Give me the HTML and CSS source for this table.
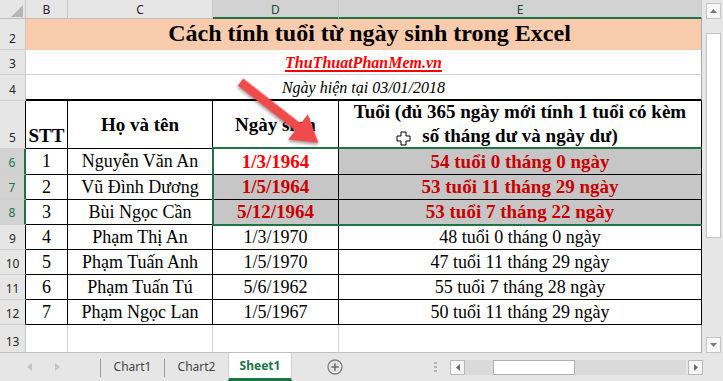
FILE: index.html
```html
<!DOCTYPE html>
<html>
<head>
<meta charset="utf-8">
<link rel="stylesheet" href="styles.css">
</head>
<body>
<div class="app">
  <div class="main">
    <div class="sheet">
      <div class="corner"><svg width="26" height="19" viewBox="0 0 26 19"><polygon points="11,17 23,17 23,5" fill="#b5b5b5"/></svg></div>
      <div class="ch">B</div>
      <div class="ch">C</div>
      <div class="ch sel">D</div>
      <div class="ch sel">E</div>

      <div class="rh">2</div>
      <div class="c title span4">Cách tính tuổi từ ngày sinh trong Excel</div>

      <div class="rh">3</div>
      <div class="c site span4"><span>ThuThuatPhanMem.vn</span></div>

      <div class="rh">4</div>
      <div class="c today span4">Ngày hiện tại 03/01/2018</div>

      <div class="rh tb">5</div>
      <div class="c t th stt">STT</div>
      <div class="c t th">Họ và tên</div>
      <div class="c t th">Ngày sinh</div>
      <div class="c t th two">Tuổi (đủ 365 ngày mới tính 1 tuổi có kèm<br>số tháng dư và ngày dư)</div>

      <div class="rh rsel">6</div>
      <div class="c t">1</div>
      <div class="c t">Nguyễn Văn An</div>
      <div class="c t b red">1/3/1964</div>
      <div class="c t b dred tint">54 tuổi 0 tháng 0 ngày</div>

      <div class="rh rsel">7</div>
      <div class="c t">2</div>
      <div class="c t">Vũ Đình Dương</div>
      <div class="c t b dred tint">1/5/1964</div>
      <div class="c t b dred tint">53 tuổi 11 tháng 29 ngày</div>

      <div class="rh rsel">8</div>
      <div class="c t">3</div>
      <div class="c t">Bùi Ngọc Cần</div>
      <div class="c t b dred tint">5/12/1964</div>
      <div class="c t b dred tint">53 tuổi 7 tháng 22 ngày</div>

      <div class="rh tb">9</div>
      <div class="c t">4</div>
      <div class="c t">Phạm Thị An</div>
      <div class="c t">1/3/1970</div>
      <div class="c t">48 tuổi 0 tháng 0 ngày</div>

      <div class="rh tb">10</div>
      <div class="c t">5</div>
      <div class="c t">Phạm Tuấn Anh</div>
      <div class="c t">1/5/1970</div>
      <div class="c t">47 tuổi 11 tháng 29 ngày</div>

      <div class="rh tb">11</div>
      <div class="c t">6</div>
      <div class="c t">Phạm Tuấn Tú</div>
      <div class="c t">5/6/1962</div>
      <div class="c t">55 tuổi 7 tháng 28 ngày</div>

      <div class="rh tb">12</div>
      <div class="c t">7</div>
      <div class="c t">Phạm Ngọc Lan</div>
      <div class="c t">1/5/1967</div>
      <div class="c t">50 tuổi 11 tháng 29 ngày</div>

      <div class="rh last">13</div>
      <div class="c last"></div>
      <div class="c last"></div>
      <div class="c last"></div>
      <div class="c last edge"></div>

      <div class="selection"></div>
    </div>
    <div class="vscroll">
      <div class="vbtn"><svg width="7" height="4" viewBox="0 0 7 4"><polygon points="0,4 7,4 3.5,0" fill="#7a7a7a"/></svg></div>
      <div class="vtrack"><div class="vthumb"></div></div>
      <div class="vbtn"><svg width="7" height="4" viewBox="0 0 7 4"><polygon points="0,0 7,0 3.5,4" fill="#7a7a7a"/></svg></div>
    </div>
  </div>
  <div class="tabbar">
    <div class="nav">
      <svg width="5" height="8" viewBox="0 0 5 8"><polygon points="5,0 5,8 0,4" fill="#c4c4c4"/></svg>
      <svg width="5" height="8" viewBox="0 0 5 8"><polygon points="0,0 0,8 5,4" fill="#c4c4c4"/></svg>
    </div>
    <div class="sep"></div>
    <div class="tab">Chart1</div>
    <div class="sep"></div>
    <div class="tab">Chart2</div>
    <div class="tab active">Sheet1</div>
    <div class="add"><svg width="16" height="16" viewBox="0 0 16 16"><circle cx="8" cy="8" r="7" fill="none" stroke="#808080" stroke-width="1.3"/><path d="M8 4.2v7.6M4.2 8h7.6" stroke="#6e6e6e" stroke-width="1.6"/></svg></div>
    <div class="dots"><i></i><i></i><i></i></div>
    <div class="hscroll">
      <div class="hbtn"><svg width="4" height="7" viewBox="0 0 4 7"><polygon points="4,0 4,7 0,3.5" fill="#6a6a6a"/></svg></div>
      <div class="htrack"><div class="hthumb"></div></div>
      <div class="hbtn"><svg width="4" height="7" viewBox="0 0 4 7"><polygon points="0,0 0,7 4,3.5" fill="#6a6a6a"/></svg></div>
    </div>
  </div>
  <svg class="overlay" width="723" height="381" viewBox="0 0 723 381">
    <g class="arrow" transform="translate(240.5 82) rotate(38)">
      <polygon points="0,-4.6 73,-4.6 73,-16 99,0 73,16 73,4.6 0,4.6" fill="#ef4b4b"/>
    </g>
    <polygon points="401,132 406,132 406,136 410,136 410,141 406,141 406,145 401,145 401,141 397,141 397,136 401,136" fill="#fff" stroke="#000" stroke-width="1"/>
  </svg>
</div>
</body>
</html>
```
FILE: styles.css
```css
* { box-sizing: border-box; }
html, body { margin: 0; padding: 0; }
body { width: 723px; height: 381px; overflow: hidden; background: #fff; }

.app {
  position: relative;
  width: 723px;
  height: 381px;
  display: flex;
  flex-direction: column;
  background: #e6e6e6;
}

.main { display: flex; height: 353px; }

.sheet {
  position: relative;
  display: grid;
  grid-template-columns: 26px 42px 145px 126px 363px;
  grid-template-rows: 19px 31px 25px 26px 48px 26px 25px 25px 25px 25px 25px 25px 28px;
  width: 702px;
  background: #fff;
}

.corner {
  background: #e6e6e6;
  border-right: 1px solid #c8c8c8;
  border-bottom: 1px solid #bdbdbd;
}
.corner svg { display: block; }

.ch {
  background: #e6e6e6;
  border-right: 1px solid #c8c8c8;
  border-bottom: 1px solid #bdbdbd;
  font-family: "Noto Sans", "Liberation Sans", sans-serif;
  font-size: 12px;
  color: #262626;
  display: flex;
  align-items: center;
  justify-content: center;
  padding-top: 1px;
}
.ch.sel {
  background: #d2d2d2;
  border-bottom: 2px solid #217346;
  color: #1d4a2e;
}
.ch:last-of-type { border-right-color: #a8a8a8; }

.rh {
  background: #e6e6e6;
  border-right: 1px solid #c8c8c8;
  border-bottom: 1px solid #d0d0d0;
  font-family: "Noto Sans", "Liberation Sans", sans-serif;
  font-size: 12px;
  color: #262626;
  display: flex;
  align-items: flex-end;
  justify-content: center;
  padding-bottom: 2px;
}
.rh.tb { border-right-color: #000; }
.rh.rsel {
  background: #d2d2d2;
  color: #217346;
  border-right: 2px solid #217346;
  padding-bottom: 3px;
}
.rh.last { border-bottom-color: #c0c0c0; }

.c {
  border-right: 1px solid #d4d4d4;
  border-bottom: 1px solid #d4d4d4;
  font-family: "Liberation Serif", "Times New Roman", serif;
  font-size: 18px;
  color: #000;
  display: flex;
  align-items: center;
  justify-content: center;
  white-space: nowrap;
  text-align: center;
}
.span4 { grid-column: span 4; border-right-color: #a8a8a8; }

.title {
  background: #f8cbad;
  border-bottom-color: #f8cbad;
  font-size: 24px;
  font-weight: bold;
  align-items: flex-end;
  padding-bottom: 2px;
  padding-left: 12px;
}
.site {
  font-size: 16px;
  font-weight: bold;
  font-style: italic;
  color: #ff0000;
  padding-top: 1px;
}
.site span {
  text-decoration: underline;
  text-decoration-thickness: 2px;
  text-underline-offset: 2px;
}
.today {
  font-size: 16px;
  font-style: italic;
  border-bottom: 2px solid #000;
  padding-top: 2px;
}

.t { border-right-color: #000; border-bottom-color: #000; }
.th { font-weight: bold; font-size: 19px; }
.th.stt { align-items: flex-end; padding-bottom: 1px; }
.th.two { line-height: 24px; padding-bottom: 1px; }
.b { font-weight: bold; font-size: 19px; }
.red { color: #ff0000; }
.dred { color: #c80000; }
.tint { background: #c6c6c6; }

.c.last { border-bottom-color: #c0c0c0; }
.c.edge { border-right-color: #a8a8a8; }

.selection {
  position: absolute;
  left: 212px;
  top: 147px;
  width: 490px;
  height: 79px;
  border: 2px solid #217346;
  border-right: none;
  pointer-events: none;
}

.vscroll {
  width: 21px;
  display: flex;
  flex-direction: column;
  align-items: center;
  padding: 3px 0 0 2px;
  background: #e6e6e6;
}
.vbtn {
  width: 15px;
  height: 16px;
  background: #f7f7f7;
  border: 1px solid #c4c4c4;
  display: flex;
  align-items: center;
  justify-content: center;
  flex: none;
}
.vbtn svg { display: block; }
.vtrack {
  flex: 1;
  width: 15px;
  padding-top: 14px;
  padding-bottom: 98px;
  margin-bottom: 1px;
}
.vthumb {
  height: 100%;
  background: #fff;
  border: 1px solid #c4c4c4;
}

.tabbar {
  height: 28px;
  display: flex;
  align-items: stretch;
  background: #e6e6e6;
  font-family: "Noto Sans", "Open Sans", "Liberation Sans", sans-serif;
  font-size: 12px;
}
.nav {
  width: 100px;
  display: flex;
  align-items: center;
  gap: 23px;
  padding-left: 27px;
}
.nav svg { display: block; }
.sep {
  width: 1px;
  background: #9c9c9c;
  margin: 6px 0 4px;
}
.tab {
  width: 63px;
  display: flex;
  align-items: center;
  justify-content: center;
  color: #444;
  padding-bottom: 2px;
}
.tab + .tab { width: 64px; }
.tab.active {
  width: 64px;
  background: #fff;
  color: #217346;
  font-weight: bold;
  border-left: 1px solid #d0d0d0;
  border-right: 1px solid #d0d0d0;
  border-bottom: 3px solid #217346;
  padding-bottom: 0;
}
.add {
  margin-left: 35px;
  display: flex;
  align-items: center;
  padding-bottom: 1px;
}
.add svg { display: block; }
.dots {
  margin-left: 91px;
  width: 3px;
  display: flex;
  flex-direction: column;
  justify-content: center;
  gap: 2px;
}
.dots i {
  display: block;
  width: 3px;
  height: 2px;
  background: #b4b4b4;
}
.hscroll {
  margin-left: 13px;
  margin-top: 7px;
  height: 15px;
  width: 253px;
  display: flex;
}
.hbtn {
  width: 15px;
  height: 15px;
  background: #f7f7f7;
  border: 1px solid #b8b8b8;
  display: flex;
  align-items: center;
  justify-content: center;
  flex: none;
}
.hbtn svg { display: block; }
.htrack {
  flex: 1;
  background: #dadada;
  margin-right: 2px;
  padding-left: 28px;
}
.hthumb {
  width: 82px;
  height: 15px;
  background: #fff;
  border: 1px solid #b0b0b0;
}

.overlay {
  position: absolute;
  left: 0;
  top: 0;
  pointer-events: none;
}
.arrow { filter: drop-shadow(1px 2px 1.5px rgba(0,0,0,0.35)); }
```
